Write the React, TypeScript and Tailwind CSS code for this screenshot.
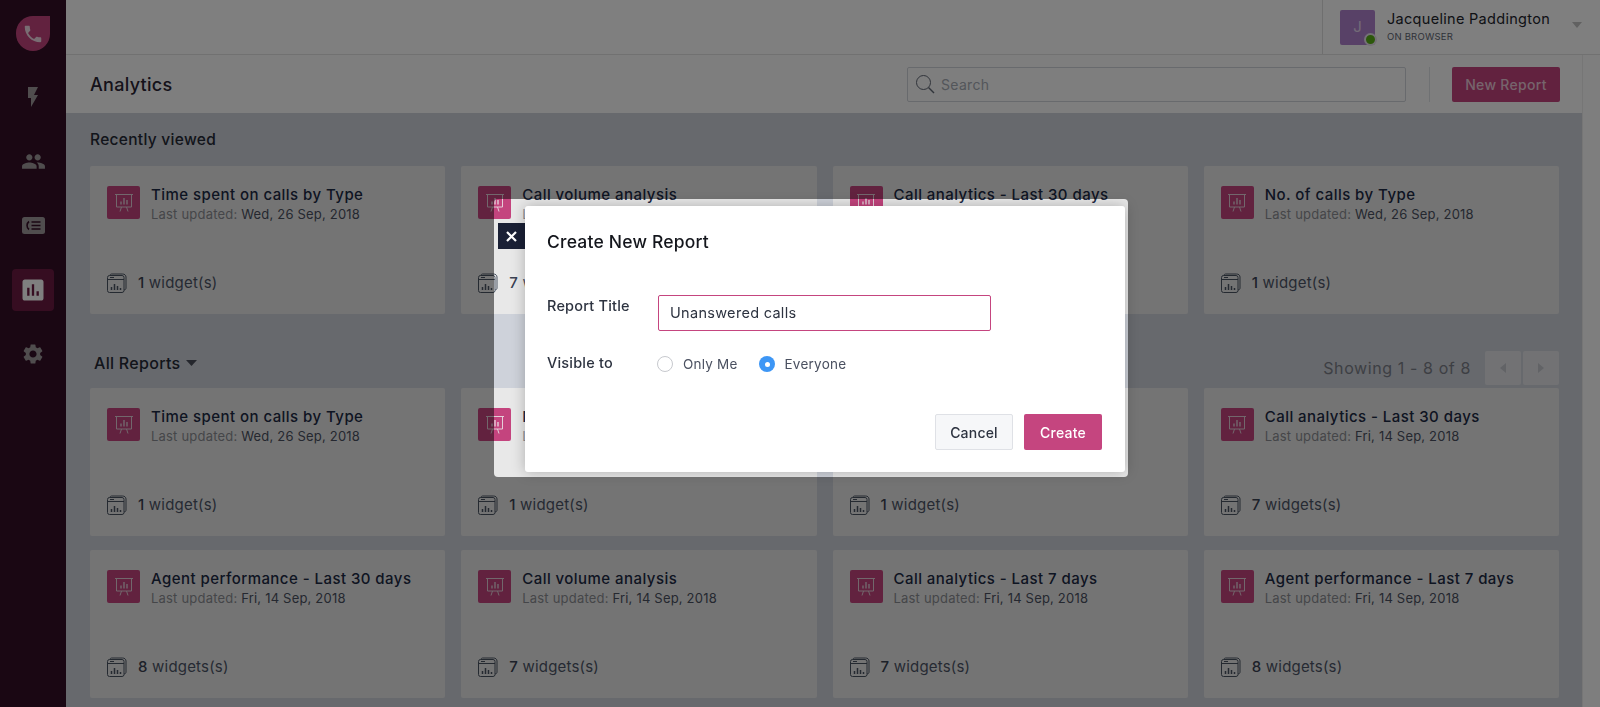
import { MdAssessment, MdFlashOn, MdPeople, MdPhone, MdSettings } from "react-icons/md";

type Report = { title: string; date: string; count: string };

const recent: Report[] = [
  { title: "Time spent on calls by Type", date: "Wed, 26 Sep, 2018", count: "1 widget(s)" },
  { title: "Call volume analysis", date: "Wed, 26 Sep, 2018", count: "7 widgets(s)" },
  { title: "Call analytics - Last 30 days", date: "Wed, 26 Sep, 2018", count: "7 widgets(s)" },
  { title: "No. of calls by Type", date: "Wed, 26 Sep, 2018", count: "1 widget(s)" },
];

// The third card's title and date sit wholly behind the dialog, so they stay empty
const all: Report[] = [
  { title: "Time spent on calls by Type", date: "Wed, 26 Sep, 2018", count: "1 widget(s)" },
  { title: "No. of calls by Type", date: "Wed, 26 Sep, 2018", count: "1 widget(s)" },
  { title: "", date: "", count: "1 widget(s)" },
  { title: "Call analytics - Last 30 days", date: "Fri, 14 Sep, 2018", count: "7 widgets(s)" },
  { title: "Agent performance - Last 30 days", date: "Fri, 14 Sep, 2018", count: "8 widgets(s)" },
  { title: "Call volume analysis", date: "Fri, 14 Sep, 2018", count: "7 widgets(s)" },
  { title: "Call analytics - Last 7 days", date: "Fri, 14 Sep, 2018", count: "7 widgets(s)" },
  { title: "Agent performance - Last 7 days", date: "Fri, 14 Sep, 2018", count: "8 widgets(s)" },
];

function ContactIcon() {
  return (
    <svg className="w-[23px] h-[17px]" viewBox="0 0 23 17">
      <rect width="23" height="17" rx="2.5" fill="#a09a9d" />
      <path d="M7 4.5c-2.6 2-2.6 6 0 8" fill="none" stroke="#340e26" strokeWidth="1.6" />
      <path d="M9.5 5h9M9.5 8.5h9M9.5 12h9" stroke="#340e26" strokeWidth="1.6" />
    </svg>
  );
}

function BoardIcon() {
  return (
    <div className="w-[33px] h-[33px] shrink-0 rounded-[2px] bg-[#c5457f] flex items-center justify-center">
      <svg className="w-[20px] h-[20px]" viewBox="0 0 20 20" fill="none" stroke="#e4cfd9" strokeWidth="1">
        <path d="M1 1.5h18M2.5 1.5v12.500h15V1.500" />
        <path d="M7 11.500V8.500M10 11.500V5M13 11.500V7" strokeWidth="1.400" />
        <path d="M7.500 14l-1.500 4.500M12.500 14l1.500 4.500" />
      </svg>
    </div>
  );
}

function WidgetIcon() {
  return (
    <svg className="w-[20px] h-[20px] shrink-0" viewBox="0 0 20 20" fill="none" stroke="#4b5563" strokeWidth="1">
      <rect x="0.500" y="2.500" width="16.500" height="17" rx="2" />
      <path d="M3 2.500c0-1 .8-1.500 1.500-1.500h11c2 0 3.500 1.200 3.500 3v11c0 1-.5 1.800-2 2" />
      <path d="M0.500 6.500h16.500M3 4.500h4" />
      <path d="M4.500 17v-3M7.500 17v-6M10.500 17v-4M13.500 17v-2" strokeWidth="1.500" />
    </svg>
  );
}

function ReportCard({ report }: { report: Report }) {
  const [num, ...rest] = report.count.split(" ");
  return (
    <div className="h-[148px] bg-[#e9e9e9] rounded-[2px] pl-[17px] pr-3 pt-[20px] pb-[20px] flex flex-col justify-between">
      <div className="flex gap-[11px]">
        <BoardIcon />
        {report.title && (
          <div className="-mt-[1px]">
            <div className="text-[15px] leading-[20px] font-medium tracking-[0.45px] text-[#1c2a44] whitespace-nowrap">{report.title}</div>
            <div className="text-[13px] leading-[18px] tracking-[0.2px] text-[#8b8d92] whitespace-nowrap">
              Last updated: <span className="text-[#4a5060]">{report.date}</span>
            </div>
          </div>
        )}
      </div>
      <div className="flex items-center gap-[11px] text-[15px] tracking-[0.2px] text-[#4d5566]">
        <WidgetIcon />
        <span>
          <span className="font-medium text-[#3b4252]">{num}</span> {rest.join(" ")}
        </span>
      </div>
    </div>
  );
}

export default function App() {
  return (
    <div className="relative h-[707px] w-[1600px] overflow-hidden flex font-['Inter',sans-serif] bg-white">
      {/* Sidebar */}
      <aside className="w-[66px] shrink-0 bg-[#340e26] flex flex-col items-center pt-[16px]">
        <div className="w-[34px] h-[35px] bg-[#c5457f] rounded-t-full rounded-bl-full rounded-br-full rounded-tr-[3px] flex items-center justify-center">
          <MdPhone className="w-[22px] h-[22px] text-[#f3dbe6]" />
        </div>
        <MdFlashOn className="mt-[34px] w-[24px] h-[24px] text-[#a09a9d]" />
        <MdPeople className="mt-[40px] w-[25px] h-[25px] text-[#a09a9d]" />
        <div className="mt-[43px] h-[17px]">
          <ContactIcon />
        </div>
        <div className="mt-[35px] w-[42px] h-[42px] rounded-[4px] bg-[#6c1b43] flex items-center justify-center">
          <MdAssessment className="w-[28px] h-[28px] text-white" />
        </div>
        <MdSettings className="mt-[31px] w-[24px] h-[24px] text-[#a09a9d]" />
      </aside>

      <div className="flex-1 min-w-0 flex flex-col">
        {/* Top bar */}
        <header className="h-[55px] shrink-0 bg-white border-b border-[#e3e3e3] flex justify-end">
          <div className="w-[278px] border-l border-[#dedede] pl-[17px] pt-[10px] flex">
            <div className="relative w-[35px] h-[35px] rounded-[2px] bg-[#b083cf] flex items-center justify-center text-[15px] text-[#e6d6ee]">
              J
              <div className="absolute -right-[2px] -bottom-[1px] w-[13px] h-[13px] rounded-full bg-[#59b016] border-2 border-[#e9e2ee]" />
            </div>
            <div className="ml-3 flex-1 -mt-[1px]">
              <div className="text-[14.500px] leading-[20px] tracking-[0.3px] text-[#22252c] whitespace-nowrap">Jacqueline Paddington</div>
              <div className="mt-[1px] text-[9.500px] leading-[14px] tracking-[0.2px] text-[#5f6673]">ON BROWSER</div>
            </div>
            <svg className="w-[10px] h-[6px] mt-[12px] mr-[18px]" viewBox="0 0 10 6">
              <path d="M0 0h10L5 6z" fill="#c2c2c2" />
            </svg>
          </div>
        </header>

        <div className="flex-1 min-h-0 flex">
          <main className="flex-1 min-w-0 bg-[#cfd2da] flex flex-col">
            {/* Title row */}
            <div className="h-[58px] shrink-0 bg-[#fdfdfd] pl-6 pr-[22px] flex items-center">
              <h1 className="text-[18px] font-medium tracking-[0.3px] text-[#2a2434]">Analytics</h1>
              <div className="ml-auto w-[499px] h-[35px] border border-[#d0d4da] rounded-[2px] flex items-center pl-[7px] text-[14px] tracking-[0.3px] text-[#a7acb5]">
                <svg className="w-[20px] h-[20px] mr-[6px]" viewBox="0 0 20 20" fill="none" stroke="#616875" strokeWidth="1">
                  <circle cx="8.500" cy="8.500" r="7" />
                  <path d="M13.500 13.500l5.500 5.500" strokeWidth="1.400" />
                </svg>
                <span className="mt-[1px]">Search</span>
              </div>
              <div className="ml-[23px] mr-[22px] w-px h-[35px] bg-[#dfe2e7]" />
              <button className="w-[108px] h-[35px] rounded-[2px] bg-[#c5457f] text-[14px] font-medium tracking-[0.3px] text-[#ecc9d9]">New Report</button>
            </div>

            <div className="pl-6 pr-[23px]">
              <h2 className="mt-[17px] text-[15.500px] leading-[20px] font-medium tracking-[0.3px] text-[#252a36]">Recently viewed</h2>
              <div className="mt-[16px] grid grid-cols-4 gap-4">
                {recent.map((r) => (
                  <ReportCard key={r.title} report={r} />
                ))}
              </div>

              <div className="mt-[37px] h-[34px] flex items-center">
                <div className="ml-[4px] mb-[10px] flex items-center gap-[6px] text-[16px] font-medium tracking-[0.3px] text-[#252a36]">
                  All Reports
                  <svg className="w-[11px] h-[6px]" viewBox="0 0 11 6">
                    <path d="M0 0h11L5.500 6z" fill="#4a4f5a" />
                  </svg>
                </div>
                <div className="ml-auto text-[16px] tracking-[0.6px] text-[#7b7f88]">Showing 1 - 8 of 8</div>
                <div className="ml-[14px] w-[36px] h-[34px] rounded-[2px] bg-[#e4e5e9] flex items-center justify-center">
                  <svg className="w-[6px] h-[10px]" viewBox="0 0 6 10">
                    <path d="M6 0v10L0 5z" fill="#c4c7cd" />
                  </svg>
                </div>
                <div className="ml-[2px] w-[36px] h-[34px] rounded-[2px] bg-[#e4e5e9] flex items-center justify-center">
                  <svg className="w-[6px] h-[10px]" viewBox="0 0 6 10">
                    <path d="M0 0v10l6-5z" fill="#c4c7cd" />
                  </svg>
                </div>
              </div>
              <div className="mt-[3px] grid grid-cols-4 gap-x-4 gap-y-[14px]">
                {all.map((r, i) => (
                  <ReportCard key={i} report={r} />
                ))}
              </div>
            </div>
          </main>
          {/* Scrollbar gutter */}
          <div className="w-[18px] shrink-0 bg-[#fdfdfd] border-l border-[#ececec]" />
        </div>
      </div>

      {/* Dimmed page */}
      <div className="absolute inset-0 bg-black/50" />

      {/* Modal: the outer panel lifts the dim, then the close tab and white sheet sit on it */}
      <div className="absolute left-[494px] top-[199px] w-[634px] h-[278px] rounded-[4px] backdrop-brightness-200" />
      <button className="absolute left-[498px] top-[223px] w-[27px] h-[26px] bg-[#1a2035] flex items-center justify-center">
        <svg className="w-[11px] h-[11px]" viewBox="0 0 11 11" stroke="#fff" strokeWidth="2.200">
          <path d="M1 1l9 9M10 1l-9 9" />
        </svg>
      </button>
      <div className="absolute left-[525px] top-[206px] w-[600px] h-[266px] rounded-[3px] bg-white shadow-[0_0_14px_rgba(0,0,0,0.25)] flex flex-col pl-[22px] pr-[23px]">
        <h3 className="mt-[25px] text-[17.500px] leading-[22px] font-medium tracking-[0.2px] text-[#14161c]">Create New Report</h3>
        <div className="mt-[42px] flex">
          <label className="w-[111px] pt-[2px] text-[14.500px] leading-[18px] font-medium tracking-[0.2px] text-[#2d3340]">Report Title</label>
          <div className="w-[333px] h-[36px] rounded-[2px] border border-[#c5457f] flex items-center pl-[11px] text-[14.500px] tracking-[0.3px] text-[#2d3340]">Unanswered calls</div>
        </div>
        <div className="mt-[23px] flex items-center">
          <label className="w-[110px] -mt-[2px] text-[14.500px] leading-[18px] font-medium tracking-[0.2px] text-[#2d3340]">Visible to</label>
          <span className="w-[16px] h-[16px] rounded-full border border-[#c7c9ce] bg-white" />
          <span className="ml-[10px] text-[13.500px] tracking-[0.2px] text-[#4a5060]">Only Me</span>
          <span className="ml-[22px] w-[16px] h-[16px] rounded-full bg-[#3d96f5] flex items-center justify-center">
            <span className="w-[5px] h-[5px] rounded-full bg-white" />
          </span>
          <span className="ml-[9px] text-[13.500px] tracking-[0.25px] text-[#4a5060]">Everyone</span>
        </div>
        <div className="mt-auto mb-[22px] flex justify-end gap-[11px]">
          <button className="w-[78px] h-[36px] rounded-[2px] border border-[#dfe1e6] bg-[#f6f7f9] text-[14px] font-medium tracking-[0.2px] text-[#2d3340]">Cancel</button>
          <button className="w-[78px] h-[36px] rounded-[2px] bg-[#c5457f] text-[14px] font-medium tracking-[0.2px] text-white">Create</button>
        </div>
      </div>
    </div>
  );
}
